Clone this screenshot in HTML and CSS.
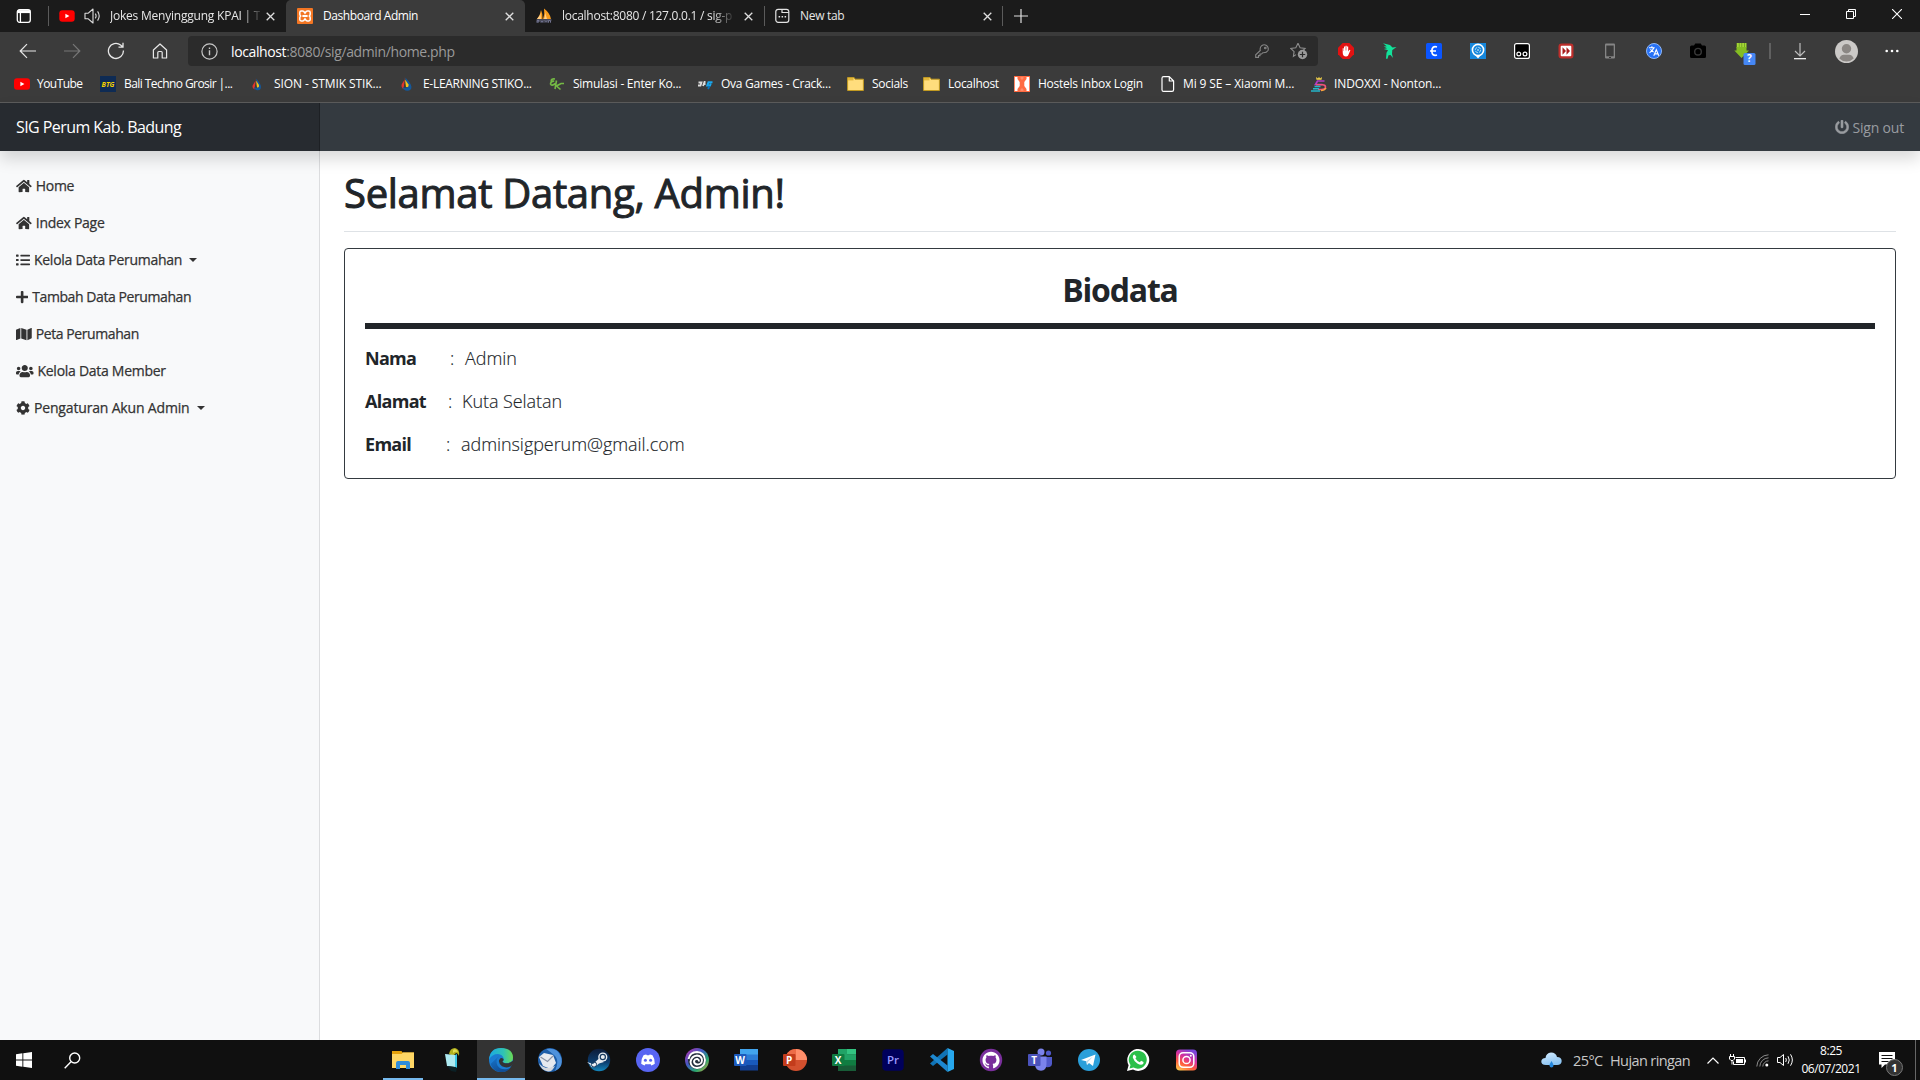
FILE: index.html
```html
<!DOCTYPE html>
<html lang="id">
<head>
<meta charset="utf-8">
<title>Dashboard Admin</title>
<link rel="stylesheet" href="styles.css">
</head>
<body>
<div class="screen">

<header class="browser">
  <div class="tabs">
    <div class="tab-actions"><svg width="16" height="16" viewBox="0 0 16 16" fill="none" stroke="#fff" stroke-width="1.3"><rect x="1.3" y="1.7" width="13" height="12.6" rx="2.2"/><path d="M1.5 3.6h12.6" stroke-width="3"/><path d="M4.4 5v9"/></svg></div>
    <div class="tab tab-first">
      <svg class="fav" width="16" height="16" viewBox="0 0 16 16"><rect x=".3" y="2.3" width="15.4" height="11.4" rx="3" fill="#f00"/><path d="M6.4 5.7v4.6l4-2.3z" fill="#fff"/></svg>
      <svg class="speaker" width="17" height="16" viewBox="0 0 17 16" fill="none" stroke="#ddd" stroke-width="1.1"><path d="M1 5.3h3L9 1v14l-5-4.3H1z" stroke-linejoin="round"/><path d="M11.3 5.6q1.6 2.4 0 4.8M13.6 3.4q3.2 4.6 0 9.2"/></svg>
      <span class="title fade t1">Jokes Menyinggung KPAI | T</span>
      <svg class="x" width="9" height="9" viewBox="0 0 9 9"><path d="M.7.7l7.6 7.6M8.3.7L.7 8.3"/></svg>
    </div>
    <div class="tab tab-active">
      <svg class="fav" width="16" height="16" viewBox="0 0 16 16"><rect width="16" height="16" rx="1" fill="#f37623"/><path d="M4.2 3h1.5q1 0 2.3 2 1.3-2 2.3-2h1.5q1.4 0 1.4 1.4v1.9q0 .9-.9 1.7.9.8.9 1.7v1.9q0 1.4-1.4 1.4h-1.5q-1 0-2.3-2-1.3 2-2.3 2H4.2q-1.4 0-1.4-1.4V9.700q0-.9.9-1.700-.9-.8-.9-1.700V4.400Q2.800 3 4.200 3z" fill="none" stroke="#fff" stroke-width="1.5"/><path d="M5.400 8h5.200" stroke="#fff" stroke-width="2"/></svg>
      <span class="title t2">Dashboard Admin</span>
      <svg class="x" width="9" height="9" viewBox="0 0 9 9"><path d="M.7.7l7.6 7.6M8.3.7L.7 8.3"/></svg>
    </div>
    <div class="tab">
      <svg class="fav" width="16" height="16" viewBox="0 0 16 16"><path d="M1 11Q4.500 7 5 2q2 4 1.500 9zM7 11Q9 6 8 .5q6 4.500 7 10.500z" fill="#f89c1d"/><path d="M1 11q3-3 3.500-6L5 11zM8 11q1.500-3 1-7l2 7z" fill="#ffd08a"/><path d="M.5 12h15M1 14.700v-2h2v1.300H1m4-1.300v2m0-1h2m0-1v2m2 0v-2l1 1 1-1v2m1.500 0v-2h2v2" stroke="#7d7f9f" stroke-width=".9" fill="none"/></svg>
      <span class="title fade t3">localhost:8080 / 127.0.0.1 / sig-p</span>
      <svg class="x" width="9" height="9" viewBox="0 0 9 9"><path d="M.7.7l7.6 7.6M8.3.7L.7 8.3"/></svg>
    </div>
    <div class="tab tab-fourth">
      <svg class="fav" width="15" height="16" viewBox="0 0 15 16" fill="none" stroke="#e4e4e4" stroke-width="1.200"><rect x=".8" y="1.300" width="13" height="13" rx="2.300"/><path d="M7 1.500v3h6.800"/><path d="M3.600 8.700h1.500m1.500 0h1.500m1.500 0h1.500" stroke-width="1.600"/></svg>
      <span class="title t4">New tab</span>
      <svg class="x" width="9" height="9" viewBox="0 0 9 9"><path d="M.7.7l7.6 7.6M8.3.7L.7 8.3"/></svg>
    </div>
    <div class="tab-new"><svg width="14" height="14" viewBox="0 0 14 14"><path d="M7 0v14M0 7h14" stroke="#e0e0e0" stroke-width="1.200"/></svg></div>
    <div class="window-buttons">
      <svg width="10" height="10" viewBox="0 0 10 10" fill="none" stroke="#fff"><path d="M0 5.500h10"/></svg>
      <svg width="10" height="10" viewBox="0 0 10 10" fill="none" stroke="#fff"><path d="M.5 2.500h7v7h-7zM2.500 2.500v-2h7v7h-2"/></svg>
      <svg width="10" height="10" viewBox="0 0 10 10" fill="none" stroke="#fff"><path d="M0 0l10 10M10 0L0 10" stroke-width="1.100"/></svg>
    </div>
  </div>

  <div class="toolbar">
    <div class="nav-buttons">
      <svg width="18" height="16" viewBox="0 0 18 16" fill="none" stroke="#e8e8e8" stroke-width="1.200"><path d="M17 8H1.500M8 1.200L1.200 8 8 14.800"/></svg>
      <svg width="18" height="16" viewBox="0 0 18 16" fill="none" stroke="#777" stroke-width="1.200"><path d="M1 8h15.500M10 1.200L16.800 8 10 14.800"/></svg>
      <svg width="18" height="18" viewBox="0 0 18 18" fill="none" stroke="#e8e8e8" stroke-width="1.300"><path d="M16.400 8.500A7.500 7.500 0 1 1 13.600 3.100L15.800 5M16 .8V5.200h-4.500"/></svg>
      <svg width="16" height="16" viewBox="0 0 16 16" fill="none" stroke="#e8e8e8" stroke-width="1.200" stroke-linejoin="round"><path d="M1.400 7L8 1l6.600 6v8h-4.400V9.500q0-1-1-1H6.800q-1 0-1 1V15H1.400z"/></svg>
    </div>
    <div class="address">
      <svg width="17" height="17" viewBox="0 0 17 17" fill="none" stroke="#c8c8c8" stroke-width="1.200"><circle cx="8.500" cy="8.500" r="7.600"/><path d="M8.500 7.300v5M8.500 4.500v1.400" stroke-width="1.400"/></svg>
      <span class="url"><b>localhost</b>:8080/sig/admin/home.php</span>
      <svg class="key" width="14" height="14" viewBox="0 0 14 14" fill="none" stroke="#858585" stroke-width="1.100"><path d="M5.300 6.500Q4.600 3.500 6.700 1.700 9 0 11.500 1.500 14 3.500 13 6.500 11.500 9 7.800 8.700L6.600 10H5v1.600H3.500v1.800H.7v-2.600z"/><circle cx="10.300" cy="4" r=".8"/></svg>
      <svg class="star" width="18" height="18" viewBox="0 0 18 18"><path d="M8 1.200l2.100 4.500 5 .7-3.400 3.400M6 12.600l-2.600 1.800.7-4.700L.8 6.400l5-.7L8 1.200" fill="none" stroke="#8d8d8d" stroke-width="1.100"/><circle cx="12.500" cy="12.500" r="4.700" fill="#9a9a9a"/><path d="M12.500 9.800v5.400M9.800 12.500h5.400" stroke="#2b2b2b" stroke-width="1.200"/></svg>
    </div>
    <div class="extensions">
      <svg width="16" height="16" viewBox="0 0 16 16"><path d="M4.700 0h6.600L16 4.700v6.600L11.300 16H4.700L0 11.300V4.700z" fill="#e21212"/><path d="M4.700 9.500V5.200h1V8h.3V3.500h1.200V7.500h.3V2.700h1.200v4.800H9V3.500h1.200V8.500l1.200-1.700 1 .5L10 12.700q-.6.800-2 .8-3.300 0-3.300-4z" fill="#fff"/></svg>
      <svg width="16" height="16" viewBox="0 0 16 16" fill="#12e29a"><path d="M1 .3L8 2l2.500 2.500L14.500 4l-3 2.300-1.200.6L10 11l1 4-2.500-3-2 .2-1 3.600H4l.5-6L6 7.200 1.800 6 5 5.300 1.700 3.600l3-.4z"/></svg>
      <svg width="16" height="16" viewBox="0 0 16 16"><rect width="16" height="16" rx="1.500" fill="#0a55ff"/><path d="M11 4Q6 2.500 5.800 8 6 13.500 11 12M4 8h6" fill="none" stroke="#fff" stroke-width="1.700"/></svg>
      <svg width="16" height="16" viewBox="0 0 16 16"><path d="M0 0h16v16H0z" fill="#1687dc"/><path d="M8 15.500l-2.500-3h5z" fill="#fff"/><circle cx="8" cy="7" r="5.600" fill="#1687dc" stroke="#fff" stroke-width="1.600"/><circle cx="8" cy="7" r="2.700" fill="none" stroke="#d6ebfa" stroke-width=".8" stroke-dasharray="3.200 1"/><circle cx="8" cy="7" r=".8" fill="#fff"/></svg>
      <svg width="16" height="16" viewBox="0 0 16 16"><rect x=".6" y=".6" width="14.800" height="14.800" rx="2" fill="#000" stroke="#fff" stroke-width="1.200"/><g fill="none" stroke="#fff" stroke-width="1.200"><circle cx="4.800" cy="11" r="1.900"/><circle cx="11" cy="11" r="1.900"/></g></svg>
      <svg width="16" height="16" viewBox="0 0 16 16"><rect x=".5" y=".5" width="15" height="15" rx="3" fill="#bd2e2b"/><rect x="2.700" y="2.700" width="10.600" height="10.600" rx="1" fill="#fff"/><path d="M4.500 4.300L8 8l-3.500 3.700zM8.500 4.300L12 8l-3.500 3.700z" fill="#a91d1d"/></svg>
      <svg width="16" height="16" viewBox="0 0 16 16"><rect x="3" y=".5" width="10" height="15" rx="1" fill="#858585"/><path d="M4.300 2.500h7.400v10.800H4.300z" fill="#3a3a3a"/><path d="M7 14.500h2" stroke="#333"/></svg>
      <svg width="16" height="16" viewBox="0 0 16 16"><circle cx="8" cy="8" r="7.500" fill="#2671f6" stroke="#8fb7f5"/><path d="M3 4.700h5.700M5.900 3.300v1.400M7.700 5Q6.500 8.400 3.500 9.700M4.500 6.200Q5.700 8.200 7.600 9M7.800 12.700l2.500-6 2.500 6M8.600 10.900h3.500" stroke="#fff" stroke-width="1.100" fill="none"/></svg>
      <svg width="16" height="16" viewBox="0 0 16 16"><path d="M1.500 2.500H4L5.300.4h5.400L12 2.500h2.500Q16 2.500 16 4v9.500q0 1.500-1.500 1.500h-13Q0 15 0 13.500V4q0-1.500 1.500-1.500z" fill="#000"/><circle cx="8" cy="8.700" r="3.300" fill="none" stroke="#393939" stroke-width="1.400"/></svg>
      <svg class="idm" width="22" height="22" viewBox="0 0 22 22"><path d="M2.500 0h10v5h-10z" fill="#6a9a22"/><path d="M3 0h1.800v4H3zM5.600 0h1.800v4H5.600zM8.200 0H10v4H8.200zM10.800 0h1.500v4h-1.500z" fill="#a5d636"/><path d="M2.500 4h10v3.500H15L7.500 15 .3 7.500h2.200z" fill="#84bd22"/><rect x="9.500" y="10" width="12" height="12" rx="1.500" fill="#4587f5"/><text x="15.500" y="19.400" text-anchor="middle" class="glyph" font-size="10">?</text></svg>
    </div>
    <span class="divider"></span>
    <div class="menu-buttons">
      <svg width="14" height="18" viewBox="0 0 14 18" fill="none"><path d="M7 1v13M2 9l5 5 5-5" stroke="#bcbcbc" stroke-width="1.200"/><path d="M1 16.700h12" stroke="#fff" stroke-width="1.200"/></svg>
      <svg width="23" height="23" viewBox="0 0 23 23"><circle cx="11.500" cy="11.500" r="11.500" fill="#cbc9c7"/><circle cx="11.500" cy="8.700" r="4.700" fill="#8b8784"/><path d="M4.300 18.600Q5.500 14.800 9 14.800h5q3.500 0 4.700 3.800-3 3-7.200 3t-7.200-3z" fill="#8b8784"/></svg>
      <svg width="14" height="4" viewBox="0 0 14 4" fill="#fff"><circle cx="1.700" cy="2" r="1.300"/><circle cx="7" cy="2" r="1.300"/><circle cx="12.300" cy="2" r="1.300"/></svg>
    </div>
  </div>

  <nav class="bookmarks">
    <a><svg width="16" height="16" viewBox="0 0 16 16"><rect y="2.300" width="16" height="11.400" rx="3" fill="#f00"/><path d="M6.400 5.700v4.600l4-2.300z" fill="#fff"/></svg><span class="b1">YouTube</span></a>
    <a><svg width="16" height="16" viewBox="0 0 16 16"><path d="M0 0h16v16H0z" fill="#0e2b54"/><text x="8" y="10.800" text-anchor="middle" class="glyph btg" textLength="13" lengthAdjust="spacingAndGlyphs">BTG</text></svg><span class="b2">Bali Techno Grosir |...</span></a>
    <a><svg width="16" height="16" viewBox="0 0 16 16"><path d="M6 2q0 3-2.500 6t1 5.500z" fill="#e3342b"/><path d="M6.300 2.500Q11 8.500 11 11q-.3 3.500-3.500 3.300-3-.3-3.500-3.500 2 2 3.500.5 1-2-.5-4z" fill="#14589a"/><path d="M6 4.500l3 4.500q.5 3-2 2.500z" fill="#f7c51c"/></svg><span class="b3">SION - STMIK STIK...</span></a>
    <a><svg width="16" height="16" viewBox="0 0 16 16"><path d="M6 1q0 3-2.500 6t1 6.500z" fill="#e3342b"/><path d="M6.300 1.500Q12.500 8 12.500 11q-.3 4-4.300 3.800-4-.3-4.500-4 2 2 4 .5 1-2-.5-4.300z" fill="#14589a"/><path d="M6 3.500l3.500 5q.5 3-2.500 2.500z" fill="#f7c51c"/></svg><span class="b4">E-LEARNING STIKO...</span></a>
    <a><svg width="16" height="16" viewBox="0 0 16 16" fill="none" stroke="#74b944" stroke-width="1.600"><path d="M6 3Q2 2.500 2.200 5h3Q1.500 5.500 1.500 8q1 2.500 5-.5M7.500 4.500L6 13M15 7.500h-3L7.500 10l4 3.500"/></svg><span class="b5">Simulasi - Enter Ko...</span></a>
    <a><svg width="16" height="16" viewBox="0 0 16 16" fill="none" stroke-width="1.800"><path d="M1.500 6.500h3L3.500 9.500H1M6 10l1.500-4 1 0M7 8h1.500" stroke="#dcdcdc"/><path d="M15.500 6.300h-4L10.300 9.500H13l.8-2" stroke="#19a7ee" stroke-width="2"/><path d="M12.500 10l-1.500 3" stroke="#0873bd"/></svg><span class="b6">Ova Games - Crack...</span></a>
    <a><svg width="17" height="16" viewBox="0 0 17 16"><path d="M.6 1.600h6.500L8 3.200h8.400v11.300H.6z" fill="#ffdd7d" stroke="#c29a21"/><path d="M1 2h5.500v2.400H1z" fill="#e2b63a"/></svg><span class="b7">Socials</span></a>
    <a><svg width="17" height="16" viewBox="0 0 17 16"><path d="M.6 1.600h6.500L8 3.200h8.400v11.300H.6z" fill="#ffdd7d" stroke="#c29a21"/><path d="M1 2h5.500v2.400H1z" fill="#e2b63a"/></svg><span class="b8">Localhost</span></a>
    <a><svg width="16" height="16" viewBox="0 0 16 16"><path d="M0 0h16v16H0z" fill="#fff"/><path d="M0 0h16v1H0zM0 15h16v1H0zM0 0h.8v16H0zM15.200 0h.8v16h-.8z" fill="#ff6b42"/><path d="M3.500 1h9v2L10.300 6v4l2.200 3v2h-9v-2l2.200-3V6L3.500 3z" fill="#ff6b42"/><path d="M6.500 1h3v1.500L8 4 6.500 2.500zM6.500 15h3v-1.500L8 12l-1.500 1.500z" fill="#ff8c6b"/></svg><span class="b9">Hostels Inbox Login</span></a>
    <a><svg width="14" height="16" viewBox="0 0 14 16" fill="none" stroke="#fff" stroke-width="1.200" stroke-linejoin="round"><path d="M2.600.7h5.700L12.600 5v8.700q0 1.600-1.600 1.600H2.600Q1 15.300 1 13.700V2.300Q1 .7 2.600.7zM8.300.8V5h4.200"/></svg><span class="b10">Mi 9 SE – Xiaomi M...</span></a>
    <a><svg width="16" height="16" viewBox="0 0 16 16" fill="none"><path d="M5 1l2 1.500L8 .8l1 1.700L11 1l-.5 2.800h-5z" fill="#f5d34a"/><path d="M13.500 5H6.500L4.500 8.500h7" stroke="#b13cc8" stroke-width="1.700"/><path d="M5 8.700h6.500q3 0 3 2.300t-4 2.500H7" stroke="#f1527a" stroke-width="1.600"/><path d="M15 12q-1.500 2.600-5 2.600" stroke="#f9a33b" stroke-width="1.500"/><path d="M3.500 10.500h6M2 12.800h6M0 15h9" stroke="#25b5c9" stroke-width="1.400"/></svg><span class="b11">INDOXXI - Nonton...</span></a>
  </nav>
</header>

<div class="page">
  <header class="navbar">
    <a class="brand"><span>SIG Perum Kab. Badung</span></a>
    <a class="signout"><svg width="14" height="14" viewBox="0 0 512 512" fill="currentColor" stroke="currentColor" stroke-width="14"><path d="M400 54.1c63 45 104 118.6 104 201.9 0 136.8-110.8 247.7-247.5 248C120 504.3 8.2 393 8 256.4 7.900 173.100 48.900 99.300 111.800 54.200c11.700-8.300 28-4.800 35 7.700L162.600 90c5.900 10.500 3.100 23.800-6.600 31-41.500 30.800-68 79.600-68 134.900-.1 92.300 74.500 168.100 168 168.100 91.600 0 168.600-74.200 168-169.100-.3-51.800-24.700-101.800-68.100-134-9.700-7.200-12.400-20.500-6.500-30.900l15.800-28.100c7-12.400 23.200-16.100 34.800-7.800zM296 264V24c0-13.300-10.700-24-24-24h-32c-13.300 0-24 10.700-24 24v240c0 13.300 10.700 24 24 24h32c13.300 0 24-10.700 24-24z"/></svg><span>Sign out</span></a>
  </header>
  <div class="body">
    <aside class="sidebar">
      <a><svg width="15.750" height="14" viewBox="0 0 576 512"><path id="home" d="M280.370 148.260L96 300.110V464a16 16 0 0 0 16 16l112.060-.29a16 16 0 0 0 15.920-16V368a16 16 0 0 1 16-16h64a16 16 0 0 1 16 16v95.640a16 16 0 0 0 16 16.050L464 480a16 16 0 0 0 16-16V300L295.670 148.260a12.190 12.190 0 0 0-15.300 0zM571.600 251.470L488 182.560V44.050a12 12 0 0 0-12-12h-56a12 12 0 0 0-12 12v72.610L318.470 43a48 48 0 0 0-61 0L4.340 251.470a12 12 0 0 0-1.600 16.900l25.500 31A12 12 0 0 0 45.150 301l235.220-193.740a12.190 12.190 0 0 1 15.300 0L530.900 301a12 12 0 0 0 16.900-1.600l25.500-31a12 12 0 0 0-1.700-16.930z"/></svg><span>Home</span></a>
      <a><svg width="15.750" height="14" viewBox="0 0 576 512"><use href="#home"/></svg><span>Index Page</span></a>
      <a><svg width="14" height="14" viewBox="0 0 512 512"><path d="M16 56h64q16 0 16 16v48q0 16-16 16H16q-16 0-16-16V72q0-16 16-16zM16 216h64q16 0 16 16v48q0 16-16 16H16q-16 0-16-16v-48q0-16 16-16zM16 376h64q16 0 16 16v48q0 16-16 16H16q-16 0-16-16v-48q0-16 16-16zM176 64h320q16 0 16 16v32q0 16-16 16H176q-16 0-16-16V80q0-16 16-16zM176 224h320q16 0 16 16v32q0 16-16 16H176q-16 0-16-16v-32q0-16 16-16zM176 384h320q16 0 16 16v32q0 16-16 16H176q-16 0-16-16v-32q0-16 16-16z"/></svg><span>Kelola Data Perumahan</span><i class="caret"></i></a>
      <a class="tight"><svg width="12.250" height="14" viewBox="0 0 448 512"><path d="M416 208H272V64c0-17.670-14.330-32-32-32h-32c-17.670 0-32 14.330-32 32v144H32c-17.670 0-32 14.330-32 32v32c0 17.670 14.330 32 32 32h144v144c0 17.670 14.330 32 32 32h32c17.670 0 32-14.330 32-32V304h144c17.670 0 32-14.330 32-32v-32c0-17.670-14.330-32-32-32z"/></svg><span>Tambah Data Perumahan</span></a>
      <a class="tight"><svg width="15.750" height="14" viewBox="0 0 576 512"><path d="M0 117.660v346.320c0 11.320 11.430 19.060 21.940 14.860L160 416V32L20.120 87.950A32.006 32.006 0 0 0 0 117.660zM192 416l192 64V96L192 32v384zM554.060 33.160L416 96v384l139.880-55.950A31.996 31.996 0 0 0 576 394.340V48.020c0-11.320-11.430-19.060-21.940-14.860z"/></svg><span>Peta Perumahan</span></a>
      <a><svg width="17.500" height="14" viewBox="0 0 640 512"><path d="M96 224c35.300 0 64-28.700 64-64s-28.700-64-64-64-64 28.700-64 64 28.700 64 64 64zm448 0c35.300 0 64-28.700 64-64s-28.700-64-64-64-64 28.700-64 64 28.700 64 64 64zm32 32h-64c-17.600 0-33.500 7.100-45.100 18.600 40.300 22.100 68.900 62 75.100 109.400h66c17.700 0 32-14.300 32-32v-32c0-35.300-28.700-64-64-64zm-256 0c61.900 0 112-50.100 112-112S381.900 32 320 32 208 82.100 208 144s50.100 112 112 112zm76.800 32h-8.300c-20.800 10-43.900 16-68.500 16s-47.600-6-68.500-16h-8.300C179.600 288 128 339.600 128 403.200V432c0 26.500 21.500 48 48 48h288c26.500 0 48-21.500 48-48v-28.800c0-63.600-51.600-115.200-115.200-115.200zm-223.700-13.400C161.500 263.100 145.600 256 128 256H64c-35.300 0-64 28.700-64 64v32c0 17.700 14.300 32 32 32h65.900c6.300-47.400 34.900-87.300 75.200-109.400z"/></svg><span>Kelola Data Member</span></a>
      <a class="loose"><svg width="14" height="14" viewBox="0 0 512 512"><path d="M487.400 315.700l-42.600-24.600c4.300-23.200 4.300-47 0-70.200l42.600-24.600c4.900-2.800 7.100-8.600 5.500-14-11.100-35.600-30-67.800-54.700-94.600-3.800-4.100-10-5.100-14.800-2.300L380.800 110c-17.900-15.400-38.500-27.300-60.800-35.100V25.800c0-5.600-3.900-10.500-9.400-11.700-36.700-8.200-74.300-7.800-109.200 0-5.500 1.200-9.400 6.100-9.400 11.700V75c-22.200 7.900-42.800 19.800-60.800 35.100L88.700 85.500c-4.900-2.800-11-1.900-14.800 2.300-24.700 26.700-43.600 58.900-54.700 94.600-1.700 5.400.6 11.200 5.500 14L67.300 221c-4.300 23.200-4.300 47 0 70.200l-42.600 24.600c-4.900 2.800-7.100 8.600-5.500 14 11.100 35.600 30 67.800 54.700 94.600 3.800 4.100 10 5.100 14.800 2.300l42.600-24.600c17.900 15.400 38.500 27.300 60.800 35.100v49.200c0 5.600 3.900 10.500 9.400 11.700 36.700 8.200 74.300 7.800 109.200 0 5.500-1.200 9.400-6.100 9.400-11.700v-49.200c22.200-7.900 42.800-19.800 60.800-35.100l42.600 24.600c4.900 2.800 11 1.900 14.800-2.300 24.700-26.700 43.600-58.900 54.700-94.600 1.500-5.500-.7-11.300-5.600-14.100zM256 336c-44.100 0-80-35.900-80-80s35.900-80 80-80 80 35.900 80 80-35.900 80-80 80z"/></svg><span>Pengaturan Akun Admin</span><i class="caret"></i></a>
    </aside>
    <main>
      <h1><span>Selamat Datang, Admin!</span></h1>
      <section class="card">
        <h2>Biodata</h2>
        <hr>
        <p class="nama"><b>Nama</b><i>:</i><span>Admin</span></p>
        <p class="alamat"><b>Alamat</b><i>:</i><span>Kuta Selatan</span></p>
        <p class="email"><b>Email</b><i>:</i><span>adminsigperum@gmail.com</span></p>
      </section>
    </main>
  </div>
</div>

<footer class="taskbar">
  <div class="start"><svg width="16" height="16" viewBox="0 0 16 16" fill="#fff"><path d="M0 2.200L6.400 1.300V7.500H0zM7.300 1.200L16 0v7.500H7.300zM0 8.500h6.400v6.200L0 13.800zM7.300 8.500H16V16l-8.700-1.200z"/></svg></div>
  <div class="find"><svg width="17" height="17" viewBox="0 0 17 17" fill="none" stroke="#fff" stroke-width="1.400"><circle cx="10.700" cy="6" r="5"/><path d="M7 9.700L.7 16.200"/></svg></div>
  <div class="apps">
    <div class="open"><svg viewBox="0 0 24 24"><path d="M1 3h9.500l1 1.500H23V9H1z" fill="#e6a20c"/><path d="M1 6h9.500l1.500-1.500h11V20H1z" fill="#ffd765"/><path d="M5 21v-6q0-2 2-2h10q2 0 2 2v6h-4v-4H9v4z" fill="#2f8ddb"/></svg></div>
    <div><svg viewBox="0 0 24 24"><path d="M9 6q1-6 6-6 5 1 4 8-1-3-3-3l-3 3z" fill="#b3b21f"/><path d="M13 2q3-2 5 2-3-1-5 1z" fill="#e0dc55"/><path d="M5 6l10 1v12l-8-1z" fill="#aeeaf1"/><path d="M15 7l2-1v14l-2-1z" fill="#3cc8e6"/><path d="M7 18l8 1 2 1-1 4-5-1z" fill="#0b2025"/></svg></div>
    <div class="open current"><svg viewBox="0 0 24 24"><defs><linearGradient id="ea" x1="0" x2="1"><stop stop-color="#1ba9e4"/><stop offset=".6" stop-color="#2fc3b4"/><stop offset="1" stop-color="#6bdb53"/></linearGradient><linearGradient id="eb" x1="0" y1="0" x2=".5" y2="1"><stop stop-color="#1678cf"/><stop offset="1" stop-color="#114c93"/></linearGradient></defs><circle cx="12" cy="12" r="12" fill="#1b7cd1"/><path d="M.1 11.500Q1 0 12 0q12 .5 12 9.500 0 5.500-6.500 5.500-4 0-4-1.800 1.500-1 1-3.200Q13.500 6.500 9 6 3 6 .1 11.500z" fill="url(#ea)"/><path d="M10.200 8Q6 12 8.500 17.500 12 22.500 18.500 21q2.700-1 3.700-2.500Q18 25 11 24 4 23 1.500 16 10 8 10.200 8z" fill="url(#eb)"/><path d="M14.500 11q.5 1.500-1 2.300.5 2 4 2 3.500 0 6.500-2.500v3l-1.800 2.500q-5 2.200-9.200 0Q8.500 14 10.500 11.500q1.500-2.500 4-.5z" fill="#333"/></svg></div>
    <div><svg viewBox="0 0 24 24"><circle cx="12" cy="12" r="12" fill="#1d5da8"/><path d="M8 1Q20-1 23 9t-6 14Q22 12 16 7T8 1z" fill="#4f92dc"/><path d="M1 9l5-4 9 2 3 8-5 6-8-3z" fill="#e6e9ef"/><path d="M2.500 9l7 4.500L15 8" fill="none" stroke="#8a93a5" stroke-width="1.200"/><path d="M1 15q3 5 10 5l6-2q-3 6-7 5.500-7-1-9-8.500z" fill="#d5d8de"/></svg></div>
    <div><svg viewBox="0 0 24 24"><defs><linearGradient id="st" x2="0" y2="1"><stop stop-color="#0d1b38"/><stop offset=".6" stop-color="#0c3d6e"/><stop offset="1" stop-color="#1387bd"/></linearGradient></defs><circle cx="12" cy="12" r="11.200" fill="url(#st)"/><path d="M0 14l6 2 6-5.500L17 14l-5 1.500-4 3.500q-4 1-5-2.500z" fill="#e9edf2"/><circle cx="15.800" cy="9" r="4.600" fill="#e9edf2"/><circle cx="15.800" cy="9" r="2.600" fill="#e9edf2" stroke="#173a60" stroke-width="1.200"/><circle cx="7" cy="16.500" r="2.600" fill="none" stroke="#173a60"/></svg></div>
    <div><svg viewBox="0 0 24 24"><circle cx="12" cy="12" r="12" fill="#5865f2"/><path d="M7.500 7.200Q9 6.500 10.300 6.400l.5.900q1.200-.2 2.400 0l.5-.9q1.300.1 2.800.8 2.600 3.800 2.300 8.500-1.600 1.300-3.500 1.700l-.9-1.500q-2.400.7-4.800 0l-.9 1.500q-1.900-.4-3.500-1.700-.3-4.700 2.300-8.500z" fill="#fff"/><circle cx="9.400" cy="12.300" r="1.500" fill="#5865f2"/><circle cx="14.600" cy="12.300" r="1.500" fill="#5865f2"/></svg></div>
    <div><svg viewBox="0 0 24 24"><defs><linearGradient id="ub" x2="1" y2="1"><stop stop-color="#c32ca5"/><stop offset=".4" stop-color="#425ac4"/><stop offset=".7" stop-color="#27a76d"/><stop offset="1" stop-color="#e6a13e"/></linearGradient></defs><circle cx="12" cy="12" r="12" fill="url(#ub)"/><circle cx="12" cy="12.200" r="9" fill="#24303d"/><path d="M3.500 11Q5 4 12 4q7.500.5 8 8-.3 7.500-8 8Q6 19.500 5.500 14 6.500 8 12 7.500q5 .5 5 5-.5 4-5 4-3-.5-3-3.500 1-2.500 3.500-2 2 1 1 2.500" fill="none" stroke="#fff" stroke-width="1.900"/></svg></div>
    <div><svg viewBox="0 0 24 24"><path d="M6 1h18v6H6z" fill="#42a5ee"/><path d="M6 6.500h18V12H6z" fill="#2c7cd6"/><path d="M6 12h18v5.500H6z" fill="#195abd"/><path d="M6 17h18v5.500H6z" fill="#123f91"/><rect y="6" width="12.500" height="12" rx="1" fill="#1c5abd"/><text x="6.200" y="15.500" class="glyph" font-size="10" text-anchor="middle">W</text></svg></div>
    <div><svg viewBox="0 0 24 24"><circle cx="13" cy="12" r="11" fill="#d3502e"/><path d="M13 1a11 11 0 0 1 11 11H13z" fill="#ff8e6a"/><path d="M13 1v11H2A11 11 0 0 1 13 1z" fill="#ed6c47"/><rect y="6" width="12.500" height="12" rx="1" fill="#c33c1c"/><text x="6.200" y="15.500" class="glyph" font-size="10" text-anchor="middle">P</text></svg></div>
    <div><svg viewBox="0 0 24 24"><path d="M6 1h18v22H6z" fill="#185c37"/><path d="M6 1h9v5.500H6zM6 6.500h9V12H6z" fill="#21a366"/><path d="M15 1h9v5.500h-9z" fill="#33c481"/><path d="M15 6.500h9V12h-9z" fill="#21a366"/><path d="M6 12h18v5.500H6z" fill="#107c41"/><rect y="6" width="12.500" height="12" rx="1" fill="#107c41"/><text x="6.200" y="15.500" class="glyph" font-size="10" text-anchor="middle">X</text></svg></div>
    <div><svg viewBox="0 0 24 24"><rect x="1.300" y="1.300" width="21.400" height="21.400" rx="4" fill="#00005b"/><text x="12" y="16" class="glyph premiere" font-size="11.500" text-anchor="middle">Pr</text></svg></div>
    <div><svg viewBox="0 0 24 24"><path d="M17.500 0v6.500L3 18l-3-2.500z" fill="#1073b5"/><path d="M3 6l14.500 11.500V24L0 8.500z" fill="#1d87cf"/><path d="M17.500 0L24 3v18l-6.500 3z" fill="#27a8ee"/></svg></div>
    <div><svg viewBox="0 0 24 24"><circle cx="12" cy="12" r="11.200" fill="#7a2f9c"/><g transform="translate(3.500 3.500) scale(.71)"><path fill="#fff" d="M12 .297c-6.630 0-12 5.373-12 12 0 5.303 3.438 9.800 8.205 11.385.6.113.82-.258.82-.577 0-.285-.010-1.040-.015-2.040-3.338.724-4.042-1.610-4.042-1.610C4.422 18.070 3.633 17.700 3.633 17.700c-1.087-.744.084-.729.084-.729 1.205.084 1.838 1.236 1.838 1.236 1.070 1.835 2.809 1.305 3.495.998.108-.776.417-1.305.76-1.605-2.665-.3-5.466-1.332-5.466-5.930 0-1.310.465-2.380 1.235-3.220-.135-.303-.54-1.523.105-3.176 0 0 1.005-.322 3.300 1.230.96-.267 1.980-.399 3-.405 1.020.006 2.040.138 3 .405 2.280-1.552 3.285-1.230 3.285-1.230.645 1.653.24 2.873.12 3.176.765.84 1.230 1.910 1.230 3.220 0 4.610-2.805 5.625-5.475 5.920.42.36.81 1.096.81 2.220 0 1.606-.015 2.896-.015 3.286 0 .315.21.69.825.57C20.565 22.092 24 17.592 24 12.297c0-6.627-5.373-12-12-12"/></g></svg></div>
    <div><svg viewBox="0 0 24 24"><circle cx="20.500" cy="5" r="2.600" fill="#5059c9"/><path d="M17 9h7v7q-1 4-6 3z" fill="#5059c9"/><circle cx="13" cy="4" r="3.500" fill="#7b83eb"/><path d="M8 8.500h10.500V16q0 6.500-5.500 6.700-5.500-.2-6-5.700z" fill="#7b83eb"/><rect y="6" width="12.500" height="12" rx="1" fill="#4b53bc"/><text x="6.200" y="15.500" class="glyph" font-size="10" text-anchor="middle">T</text></svg></div>
    <div><svg viewBox="0 0 24 24"><circle cx="12" cy="12" r="11" fill="#2a9fda"/><path d="M4 12L18.500 6.500 16 18l-4-3-2 2-.7-3.800z" fill="#fff"/><path d="M9.300 13.200L16 8.500l-5.300 5.700L10 17z" fill="#b9d7e8"/></svg></div>
    <div><svg viewBox="0 0 24 24"><path d="M1 23l1.600-5.800A11 11 0 1 1 7 21.600z" fill="#fff"/><path d="M3.500 20.500l1-3.500a9 9 0 1 1 3 2.600z" fill="#2bc04a"/><path d="M8.500 6.500q-2 .5-1.700 3 1 3.500 4.500 6 3.500 2 5.500.8 1-1 .7-2.300l-2.400-1.200-1.300 1.500q-3-1.200-4.400-4L10.500 9z" fill="#fff"/></svg></div>
    <div><svg viewBox="0 0 24 24"><defs><linearGradient id="ig" x1=".1" y1="1" x2=".6" y2="0"><stop stop-color="#ffd04f"/><stop offset=".35" stop-color="#ff5b3c"/><stop offset=".65" stop-color="#d7309e"/><stop offset="1" stop-color="#7a45d8"/></linearGradient></defs><rect x="1" y="1.500" width="21" height="21" rx="4" fill="url(#ig)"/><g fill="none" stroke="#fff" stroke-width="1.500"><rect x="4.200" y="4.700" width="14.600" height="14.600" rx="4"/><circle cx="11.500" cy="12" r="3.600"/></g><circle cx="15.800" cy="7.700" r="1" fill="#fff"/></svg></div>
  </div>
  <div class="tray">
    <svg class="cloud" width="21" height="17" viewBox="0 0 21 17"><defs><linearGradient id="cl" x1="0" y1="0" x2=".4" y2="1"><stop stop-color="#d5edff"/><stop offset="1" stop-color="#8cc4f2"/></linearGradient></defs><path d="M5 13q-5 0-4.700-4Q1 6 4.500 6 5 1 10 .5q5 0 6 4.500 4.500 0 4.700 4-.2 4-4.700 4z" fill="url(#cl)"/><path d="M10.500 9q2 3 2 4.500 0 2-2 2t-2-2q0-1.500 2-4.500z" fill="#2386dc"/></svg>
    <span class="temp">25°C</span><span class="weather">Hujan ringan</span>
    <svg class="chev" width="12" height="7" viewBox="0 0 12 7" fill="none" stroke="#fff" stroke-width="1.200"><path d="M.5 6.500L6 1l5.500 5.500"/></svg>
    <svg class="batt" width="17" height="12" viewBox="0 0 17 12" fill="none" stroke="#fff"><path d="M6.500 3.500h9v7H4.500v-3M16.500 5.500v3M1.500 0v2M4.500 0v2M.5 2.500h5V5L4 6.500H2L.5 5zM3 6.500v4"/><path d="M7 5h7v4H7z" fill="#fff" stroke="none"/></svg>
    <svg class="wifi" width="13" height="13" viewBox="0 0 13 13" fill="none" stroke="#8c8c8c"><path d="M.8 12.500A12 12 0 0 1 12.500.8M3.800 12.500A9 9 0 0 1 12.500 3.800M6.800 12.500A6 6 0 0 1 12.500 6.800"/><circle cx="10.800" cy="11" r="1.500" fill="#fff" stroke="none"/></svg>
    <svg class="vol" width="17" height="14" viewBox="0 0 17 14" fill="none" stroke="#fff"><path d="M.5 4.500H3l3.500-3v11L3 9.500H.5z"/><path d="M8.700 5q1.300 2 0 4M11 3.200q2.500 3.800 0 7.600M13.500 1.300q3.700 5.700 0 11.400"/></svg>
    <div class="clock"><span>8:25</span><span>06/07/2021</span></div>
    <svg class="notice" width="25" height="25" viewBox="0 0 25 25"><path d="M0 0h16v12.500H6L2.500 16v-3.500H0z" fill="#fff"/><path d="M2.500 3.500h11M2.500 6.500h11M2.500 9.500h7" stroke="#101010"/><circle cx="15.500" cy="15.500" r="8" fill="#333" stroke="#777"/><text x="15.500" y="19.600" text-anchor="middle" class="glyph" font-size="11">1</text></svg>
    <span class="peek"></span>
  </div>
</footer>
</div>
</body>
</html>
```
FILE: styles.css
```css
* { box-sizing: border-box; }
html, body { margin: 0; height: 100%; overflow: hidden; }
body { font-family: "Open Sans", "Noto Sans", sans-serif; color: #212529; }
svg { display: block; flex: none; }
.glyph { font-family: "Open Sans", sans-serif; font-weight: 700; fill: #fff; }
.btg { font-size: 7px; font-style: italic; fill: #f5d000; }
.premiere { fill: #9a99ff; font-weight: 600; }
.screen { width: 1920px; height: 1080px; display: flex; flex-direction: column; background: #fff; }

/* browser chrome */
.browser { height: 103px; flex: none; background: #3b3b3b; border-bottom: 1px solid #5c5c5c; color: #fff; font-size: 12px; white-space: nowrap; }
.tabs { height: 32px; background: #1b1b1b; display: grid; grid-template-columns: 48px 238px 239px 239px 239px 44px 1fr; }
.tab-actions { display: flex; align-items: center; padding-left: 16px; }
.tab { display: flex; align-items: center; padding: 0 11px; color: #e6e6e6; }
.tab .fav { margin-right: 10px; }
.tab .title { line-height: 16px; }
.tab .x { margin-left: auto; fill: none; stroke: #dedede; stroke-width: 1.3; }
.tab-first { background: linear-gradient(#5b5b5b, #5b5b5b) 0 center / 1px 20px no-repeat; }
.tab-first .fav { margin-right: 9px; }
.tab-first .speaker { margin-right: 9px; }
.tab-active { background: #3b3b3b; border-radius: 5px 5px 0 0; color: #fff; }
.tab-fourth { background: linear-gradient(#5b5b5b, #5b5b5b) 0 center / 1px 20px no-repeat, linear-gradient(#5b5b5b, #5b5b5b) 100% center / 1px 20px no-repeat; }
.fade { -webkit-mask-image: linear-gradient(90deg, #000 88%, rgba(0,0,0,.15)); mask-image: linear-gradient(90deg, #000 88%, rgba(0,0,0,.15)); }
.t1 { letter-spacing: -0.22px; }
.t2 { letter-spacing: -0.43px; }
.t3 { letter-spacing: -0.27px; }
.t4 { letter-spacing: -0.3px; }
.tab-new { display: flex; align-items: center; padding-left: 11px; }
.window-buttons { display: flex; justify-content: flex-end; align-items: flex-start; gap: 36px; padding: 9px 18px 0 0; }

.toolbar { height: 38px; display: flex; align-items: center; padding-left: 6px; }
.nav-buttons { display: grid; grid-template-columns: repeat(4, 44px); justify-items: center; align-items: center; width: 182px; }
.address { width: 1130px; height: 30px; background: #2b2b2b; border-radius: 4px; display: flex; align-items: center; padding: 0 10px 0 13px; }
.url { margin-left: 13px; font-size: 14px; letter-spacing: -0.38px; color: #9a9a9a; }
.url b { font-weight: 400; color: #fff; }
.key { margin-left: auto; }
.star { margin-left: 21px; }
.extensions { display: grid; grid-template-columns: repeat(10, 44px); justify-items: center; align-items: center; margin-left: 6px; }
.idm { margin: 6px 0 0 6px; }
.divider { width: 2px; height: 16px; background: #606060; margin: 0 6px 0 5px; }
.menu-buttons { display: grid; grid-template-columns: repeat(3, 46px); justify-items: center; align-items: center; }

.bookmarks { height: 27px; display: grid; padding-left: 14px; align-items: center; grid-template-columns: 86px 150px 149px 150px 148px 150px 76px 91px 147px 150px 140px; }
.bookmarks a { display: flex; align-items: center; }
.bookmarks span { margin-left: 8px; letter-spacing: -0.3px; }
.bookmarks .b1 { margin-left: 7px; letter-spacing: -0.55px; }
.bookmarks .b2 { letter-spacing: -0.57px; }
.bookmarks .b3 { letter-spacing: -0.1px; }
.bookmarks .b5, .bookmarks .b6, .bookmarks .b9 { letter-spacing: -0.25px; }
.bookmarks .b10, .bookmarks .b11 { letter-spacing: -0.12px; }
.bookmarks .b11 { margin-left: 7px; }

/* admin page */
.page { flex: 1; display: flex; flex-direction: column; min-height: 0; }
.navbar { height: 48px; flex: none; background: #343a40; display: flex; justify-content: space-between; align-items: center; box-shadow: 0 8px 16px rgba(0,0,0,.15); z-index: 1; white-space: nowrap; }
.brand { width: 320px; height: 48px; padding-left: 16px; display: flex; align-items: center; background: #272b30; border-right: 1px solid #1d2024; color: #fff; font-size: 16px; letter-spacing: -0.57px; }
.signout { display: flex; align-items: center; gap: 4px; padding-right: 16px; color: #999ca0; font-size: 14px; letter-spacing: -0.2px; }
.body { flex: 1; display: flex; min-height: 0; }
.sidebar { width: 320px; background: #f8f9fa; border-right: 1px solid #dcdddf; padding: 16px 16px 0; font-size: 14px; color: #333; -webkit-text-stroke: .25px #333; letter-spacing: -0.28px; white-space: nowrap; }
.sidebar a { height: 37px; display: flex; align-items: center; gap: 4px; }
.sidebar .tight { letter-spacing: -0.42px; }
.sidebar .loose { letter-spacing: -0.17px; }
.sidebar svg { fill: #333; }
.caret { border: 4.2px solid transparent; border-top-color: #333; border-bottom: 0; margin-left: 3px; }
main { flex: 1; padding: 16px 24px 0; }
h1 { margin: 0 0 16px; height: 65px; border-bottom: 1px solid #dee2e6; font-size: 40px; line-height: 51px; font-weight: 400; -webkit-text-stroke: 1px #212529; letter-spacing: -0.3px; white-space: nowrap; }
.card { height: 231px; border: 1px solid #343a40; border-radius: 4px; padding: 20px; }
h2 { margin: 0; height: 54px; line-height: 41px; text-align: center; font-size: 32px; font-weight: 700; letter-spacing: -1.2px; }
hr { margin: 0 0 16px; height: 6px; border: 0; background: #212529; }
.card p { margin: 0 0 16px; height: 27px; line-height: 27px; display: grid; font-size: 18px; font-weight: 300; letter-spacing: -0.06px; white-space: nowrap; -webkit-text-stroke: .15px #212529; }
.card b { font-weight: 700; letter-spacing: -0.7px; -webkit-text-stroke: 0; }
.card i { font-style: normal; }
.nama { grid-template-columns: 85px 15px 1fr; }
.alamat { grid-template-columns: 83px 14px 1fr; }
.email { grid-template-columns: 81px 15px 1fr; }

/* desktop taskbar */
.taskbar { height: 40px; flex: none; background: #101010; display: flex; color: #fff; white-space: nowrap; }
.start { width: 48px; display: grid; place-items: center; }
.find { width: 48px; display: grid; place-items: center; }
.apps { margin-left: 283px; display: grid; grid-template-columns: repeat(17, 48px); column-gap: 1px; }
.apps div { display: grid; place-items: center; }
.apps svg { width: 24px; height: 24px; }
.open { background: linear-gradient(#76b9ed, #76b9ed) center bottom / 40px 2px no-repeat; }
.apps .current { background: linear-gradient(#76b9ed, #76b9ed) center bottom / 48px 2px no-repeat #333; }
.tray { margin-left: auto; display: flex; align-items: center; }
.temp { width: 37px; margin-left: 11px; font-size: 14.5px; letter-spacing: -0.6px; color: #c8c8c8; }
.weather { width: 97px; font-size: 14.5px; letter-spacing: -0.6px; color: #c8c8c8; }
.batt { margin-left: 10px; }
.wifi { margin-left: 10px; }
.vol { margin-left: 8px; }
.clock { width: 74px; display: flex; flex-direction: column; align-items: center; font-size: 12px; line-height: 18px; letter-spacing: -0.45px; }
.notice { margin: 8px 11px 0; }
.peek { width: 1px; height: 40px; background: #666; margin-right: 4px; }
```
